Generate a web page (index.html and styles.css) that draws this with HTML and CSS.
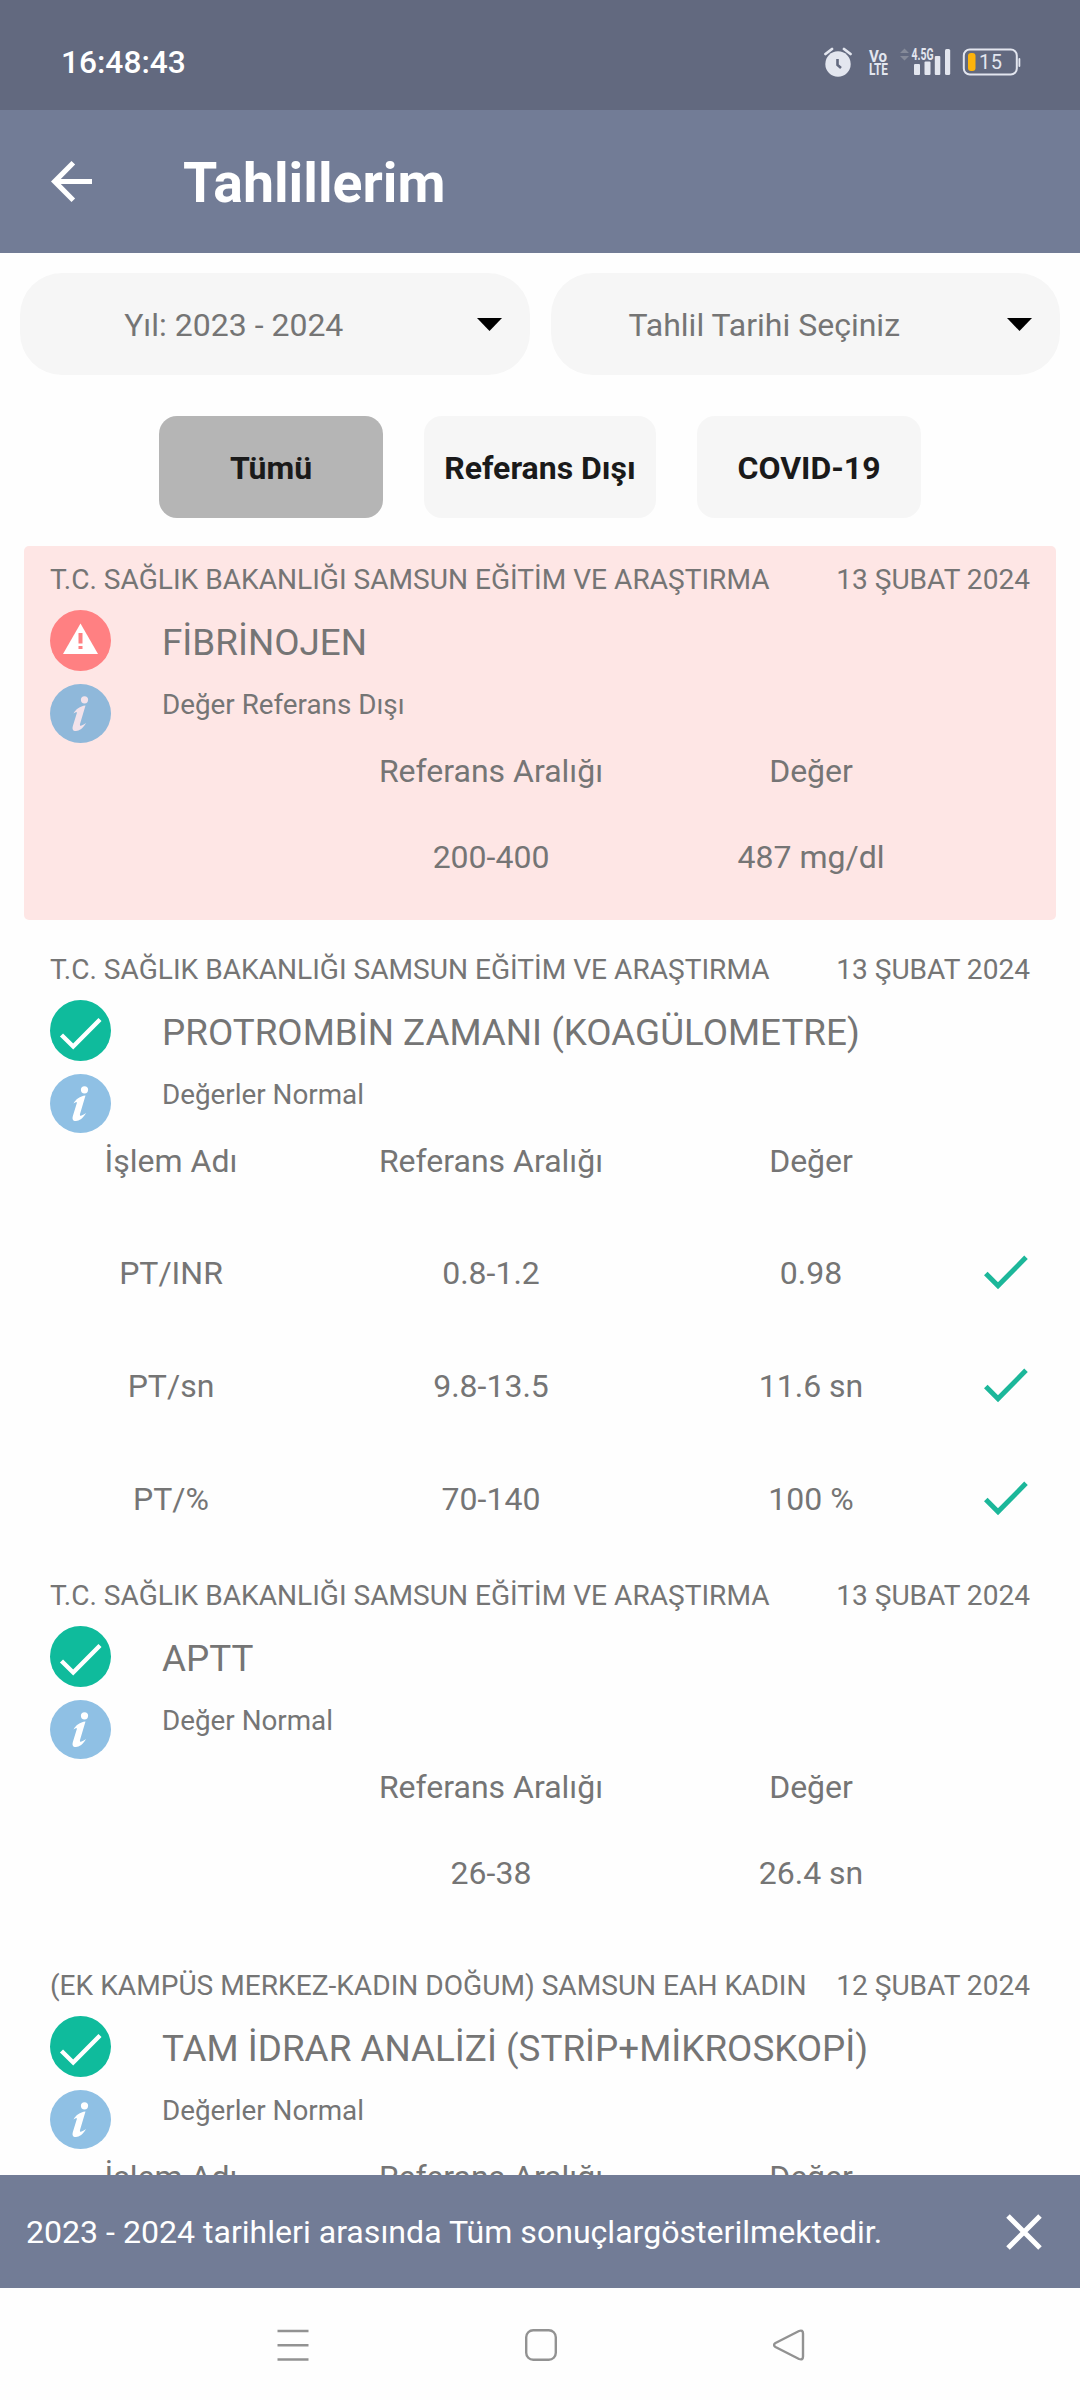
FILE: index.html
```
<!DOCTYPE html>
<html lang="tr">
<head>
  <meta charset="utf-8">
  <title>Tahlillerim</title>
  <link rel="stylesheet" href="styles.css">
</head>
<body>
  <!-- icons used more than once -->
  <svg class="sprite">
    <symbol id="icon-ok" viewBox="0 0 61 61">
      <circle cx="30.5" cy="30.5" r="30.5" fill="#0fbb9c"/>
      <path d="M11.5 35L23.2 46.5L50 19.5" fill="none" stroke="#fff" stroke-width="4.4"/>
    </symbol>
    <symbol id="icon-info" viewBox="0 0 61 59">
      <ellipse class="info-bg" cx="30.5" cy="29.5" rx="30.5" ry="29.5"/>
      <circle class="info-mark" cx="34.5" cy="15.8" r="3.6"/>
      <path class="info-mark" d="M23.5 29.5C25.500 25.500 30 22 35.500 21.500L30 40C29.500 42.500 31 42.500 36 39C33.500 44 29 47 26 47C22.500 47 22 45 23 41.500L27 28.500C26.500 28 25 28.500 23.500 29.500Z"/>
    </symbol>
    <symbol id="icon-tick" viewBox="0 0 44 35">
      <path d="M1.800 18.500L14 30.800L42 2.300" fill="none" stroke="#1cb79a" stroke-width="5"/>
    </symbol>
    <symbol id="icon-caret" viewBox="0 0 25 13">
      <path d="M0 0H25L12.500 13Z"/>
    </symbol>
  </svg>

  <div class="status-bar">
    <span class="time">16:48:43</span>
    <svg class="status-icons" viewBox="0 0 200 32" width="200" height="32">
      <circle cx="14" cy="18" r="12.700"/>
      <path d="M1.500 8L8 3M26.500 8L20 3" class="line" stroke-width="2.800"/>
      <path d="M13.500 13V19L17 22" class="dark-line"/>
      <text x="45" y="15.500" textLength="18" lengthAdjust="spacingAndGlyphs" class="net">Vo</text>
      <text x="45" y="29" textLength="19" lengthAdjust="spacingAndGlyphs" class="net">LTE</text>
      <path d="M76 7L80.500 2.500L85 7ZM76 10L80.500 14.500L85 10Z" class="dim"/>
      <text x="87.500" y="14" textLength="22" lengthAdjust="spacingAndGlyphs" class="net">4.5G</text>
      <rect x="90" y="18" width="6" height="11" rx="1"/>
      <rect x="100.500" y="15.500" width="6" height="13.500" rx="1"/>
      <rect x="110.800" y="10" width="5.500" height="19" rx="1"/>
      <rect x="121" y="3" width="5.200" height="26" rx="1.500"/>
      <rect x="139.800" y="3.500" width="53" height="25" rx="6" class="line" stroke-width="2"/>
      <rect x="194.500" y="12" width="1.800" height="9" rx="0.900"/>
      <rect x="144" y="7" width="7.500" height="18" rx="3" class="charge"/>
      <text x="155" y="23" class="percent">15</text>
    </svg>
  </div>

  <div class="app-bar">
    <svg class="back" viewBox="4 4 16 16" width="41" height="41">
      <path d="M20 11H7.830l5.590-5.590L12 4l-8 8 8 8 1.410-1.410L7.830 13H20v-2z" fill="#fff"/>
    </svg>
    <h1>Tahlillerim</h1>
  </div>

  <div class="content">
    <div class="filters">
      <div class="select">
        <span>Yıl: 2023 - 2024</span>
        <svg width="25" height="13"><use href="#icon-caret"/></svg>
      </div>
      <div class="select">
        <span>Tahlil Tarihi Seçiniz</span>
        <svg width="25" height="13"><use href="#icon-caret"/></svg>
      </div>
    </div>

    <div class="tabs">
      <div class="tab active">Tümü</div>
      <div class="tab wide">Referans Dışı</div>
      <div class="tab">COVID-19</div>
    </div>

    <div class="card alert">
      <div class="card-top">
        <span>T.C. SAĞLIK BAKANLIĞI SAMSUN EĞİTİM VE ARAŞTIRMA</span>
        <span>13 ŞUBAT 2024</span>
      </div>
      <div class="card-head">
        <div class="icons">
          <svg viewBox="0 0 61 61" width="61" height="61">
            <circle cx="30.500" cy="30.500" r="30.500" fill="#ff8082"/>
            <path d="M30.500 13.500L48 44H13Z" fill="#fff"/>
            <path d="M28.500 23H32.500V33.500H28.500ZM28.500 36H32.500V39H28.500Z" fill="#ff8082"/>
          </svg>
          <svg class="info" width="61" height="59"><use href="#icon-info"/></svg>
        </div>
        <div class="titles">
          <h2>FİBRİNOJEN</h2>
          <p>Değer Referans Dışı</p>
        </div>
      </div>
      <div class="row head">
        <span></span>
        <span>Referans Aralığı</span>
        <span>Değer</span>
      </div>
      <div class="row single">
        <span></span>
        <span>200-400</span>
        <span>487 mg/dl</span>
      </div>
    </div>

    <div class="card">
      <div class="card-top">
        <span>T.C. SAĞLIK BAKANLIĞI SAMSUN EĞİTİM VE ARAŞTIRMA</span>
        <span>13 ŞUBAT 2024</span>
      </div>
      <div class="card-head">
        <div class="icons">
          <svg width="61" height="61"><use href="#icon-ok"/></svg>
          <svg class="info" width="61" height="59"><use href="#icon-info"/></svg>
        </div>
        <div class="titles">
          <h2>PROTROMBİN ZAMANI (KOAGÜLOMETRE)</h2>
          <p>Değerler Normal</p>
        </div>
      </div>
      <div class="row head">
        <span>İşlem Adı</span>
        <span>Referans Aralığı</span>
        <span>Değer</span>
      </div>
      <div class="row">
        <span>PT/INR</span>
        <span>0.8-1.2</span>
        <span>0.98</span>
        <svg width="44" height="35"><use href="#icon-tick"/></svg>
      </div>
      <div class="row">
        <span>PT/sn</span>
        <span>9.8-13.5</span>
        <span>11.6 sn</span>
        <svg width="44" height="35"><use href="#icon-tick"/></svg>
      </div>
      <div class="row">
        <span>PT/%</span>
        <span>70-140</span>
        <span>100 %</span>
        <svg width="44" height="35"><use href="#icon-tick"/></svg>
      </div>
    </div>

    <div class="card">
      <div class="card-top">
        <span>T.C. SAĞLIK BAKANLIĞI SAMSUN EĞİTİM VE ARAŞTIRMA</span>
        <span>13 ŞUBAT 2024</span>
      </div>
      <div class="card-head">
        <div class="icons">
          <svg width="61" height="61"><use href="#icon-ok"/></svg>
          <svg class="info" width="61" height="59"><use href="#icon-info"/></svg>
        </div>
        <div class="titles">
          <h2>APTT</h2>
          <p>Değer Normal</p>
        </div>
      </div>
      <div class="row head">
        <span></span>
        <span>Referans Aralığı</span>
        <span>Değer</span>
      </div>
      <div class="row single">
        <span></span>
        <span>26-38</span>
        <span>26.4 sn</span>
      </div>
    </div>

    <div class="card">
      <div class="card-top">
        <span>(EK KAMPÜS MERKEZ-KADIN DOĞUM) SAMSUN EAH KADIN</span>
        <span>12 ŞUBAT 2024</span>
      </div>
      <div class="card-head">
        <div class="icons">
          <svg width="61" height="61"><use href="#icon-ok"/></svg>
          <svg class="info" width="61" height="59"><use href="#icon-info"/></svg>
        </div>
        <div class="titles">
          <h2>TAM İDRAR ANALİZİ (STRİP+MİKROSKOPİ)</h2>
          <p>Değerler Normal</p>
        </div>
      </div>
      <div class="row head">
        <span>İşlem Adı</span>
        <span>Referans Aralığı</span>
        <span>Değer</span>
      </div>
    </div>
  </div>

  <div class="snackbar">
    <span>2023 - 2024 tarihleri arasında Tüm sonuçlargösterilmektedir.</span>
    <svg viewBox="0 0 36 36" width="36" height="36">
      <path d="M2 2L34 34M34 2L2 34" fill="none" stroke="#fff" stroke-width="5"/>
    </svg>
  </div>

  <div class="nav-bar">
    <svg viewBox="0 0 32 32" width="32" height="32">
      <path d="M0.500 2H31.500M0.500 16.300H31.500M0.500 30.500H31.500"/>
    </svg>
    <svg viewBox="0 0 32 32" width="32" height="32">
      <rect x="1.200" y="1.200" width="29.600" height="29.600" rx="7"/>
    </svg>
    <svg viewBox="0 0 32 32" width="32" height="32">
      <path d="M2.500 14L26 2Q30 0.500 30 4.500V27.500Q30 31.500 26 30L2.500 18Q-0.500 16 2.500 14Z"/>
    </svg>
  </div>
</body>
</html>
```
FILE: styles.css
```
* {
  box-sizing: border-box;
}

body {
  margin: 0;
  width: 1080px;
  height: 2400px;
  display: flex;
  flex-direction: column;
  overflow: hidden;
  background-color: #fefefe;
  color: #757575;
  font-family: Roboto, sans-serif;
  font-size: 32px;
}

h1, h2, p {
  margin: 0;
  font-weight: 400;
}

svg {
  display: block;
  flex: none;
}

.sprite {
  width: 0;
  height: 0;
  position: absolute;
}

/* top bars */
.status-bar {
  flex: none;
  height: 110px;
  padding: 14px 56px 0 61px;
  display: flex;
  align-items: center;
  justify-content: space-between;
  background-color: #62697f;
}

.time {
  color: #fff;
  font-size: 31.7px;
  font-weight: 500;
}

.status-icons {
  fill: #e3e6ef;
}

.status-icons .line {
  fill: none;
  stroke: #e3e6ef;
  stroke-linecap: round;
}

.status-icons .dark-line {
  fill: none;
  stroke: #62697f;
  stroke-width: 2.6;
}

.status-icons .dim {
  fill: #858a99;
}

.status-icons .charge {
  fill: #fdb40c;
}

.net {
  font-size: 16px;
  font-weight: 700;
}

.percent {
  font-size: 20px;
  letter-spacing: 0.5px;
}

.app-bar {
  flex: none;
  height: 143px;
  padding-left: 51px;
  display: flex;
  align-items: center;
  background-color: #727c96;
}

.app-bar h1 {
  margin: 3px 0 0 91px;
  color: #fff;
  font-size: 55.4px;
  font-weight: 700;
}

/* filters */
.content {
  flex: 1;
  min-height: 0;
  padding: 20px 24px 0;
  overflow: hidden;
}

.filters {
  margin: 0 -4px;
  display: flex;
  gap: 21px;
}

.select {
  flex: 1;
  height: 102px;
  padding-right: 28px;
  display: flex;
  align-items: center;
  border-radius: 42px;
  background-color: #f6f6f6;
}

.select span {
  flex: 1;
  padding: 1px 29px 0 0;
  text-align: center;
}

.tabs {
  margin-top: 41px;
  display: flex;
  justify-content: center;
  gap: 41px;
}

.tab {
  width: 224px;
  height: 102px;
  line-height: 105px;
  border-radius: 18px;
  background-color: #f6f6f6;
  color: #1a1a1a;
  font-weight: 700;
  text-align: center;
}

.tab.wide {
  width: 232px;
}

.tab.active {
  background-color: #b5b5b5;
}

/* result cards */
.card {
  margin-bottom: 16px;
  border-radius: 5px;
}

.card.alert {
  margin-top: 28px;
  background-color: #fee6e5;
}

.card-top {
  height: 64px;
  padding: 17px 26px 0;
  display: flex;
  justify-content: space-between;
  font-size: 28.1px;
  line-height: 33px;
  white-space: nowrap;
}

.card-head {
  height: 133px;
  padding-left: 26px;
  display: flex;
}

.icons .info {
  margin-top: 13px;
}

.info-bg {
  fill: var(--info-bg, #8fc0e4);
}

.info-mark {
  fill: var(--info-mark, #fff);
}

.alert {
  --info-bg: #8fb8da;
  --info-mark: #f3e2ea;
}

.titles {
  margin-left: 51px;
}

.titles h2 {
  margin-top: 11px;
  font-size: 36.8px;
  line-height: 43px;
}

.titles p {
  margin-top: 25px;
  font-size: 27.8px;
  line-height: 32px;
}

.row {
  height: 113px;
  margin: 0 -13px;
  padding-top: 18px;
  display: grid;
  grid-template-columns: 320px 320px 320px 70px;
  align-items: center;
  text-align: center;
}

.row svg {
  justify-self: center;
}

.row.head {
  height: 74px;
  padding: 0 0 19px;
}

.row.single {
  height: 103px;
  padding: 0 0 24px;
}

/* bottom */
.snackbar {
  flex: none;
  height: 113px;
  padding: 0 38px 0 26px;
  display: flex;
  align-items: center;
  justify-content: space-between;
  background-color: #727c96;
  color: #fff;
  font-size: 32.1px;
}

.snackbar span {
  padding-top: 1px;
}

.nav-bar {
  flex: none;
  height: 112px;
  padding: 1px 275px 0 277px;
  display: flex;
  align-items: center;
  justify-content: space-between;
}

.nav-bar svg {
  fill: none;
  stroke: #929292;
  stroke-width: 2.4;
}
```
